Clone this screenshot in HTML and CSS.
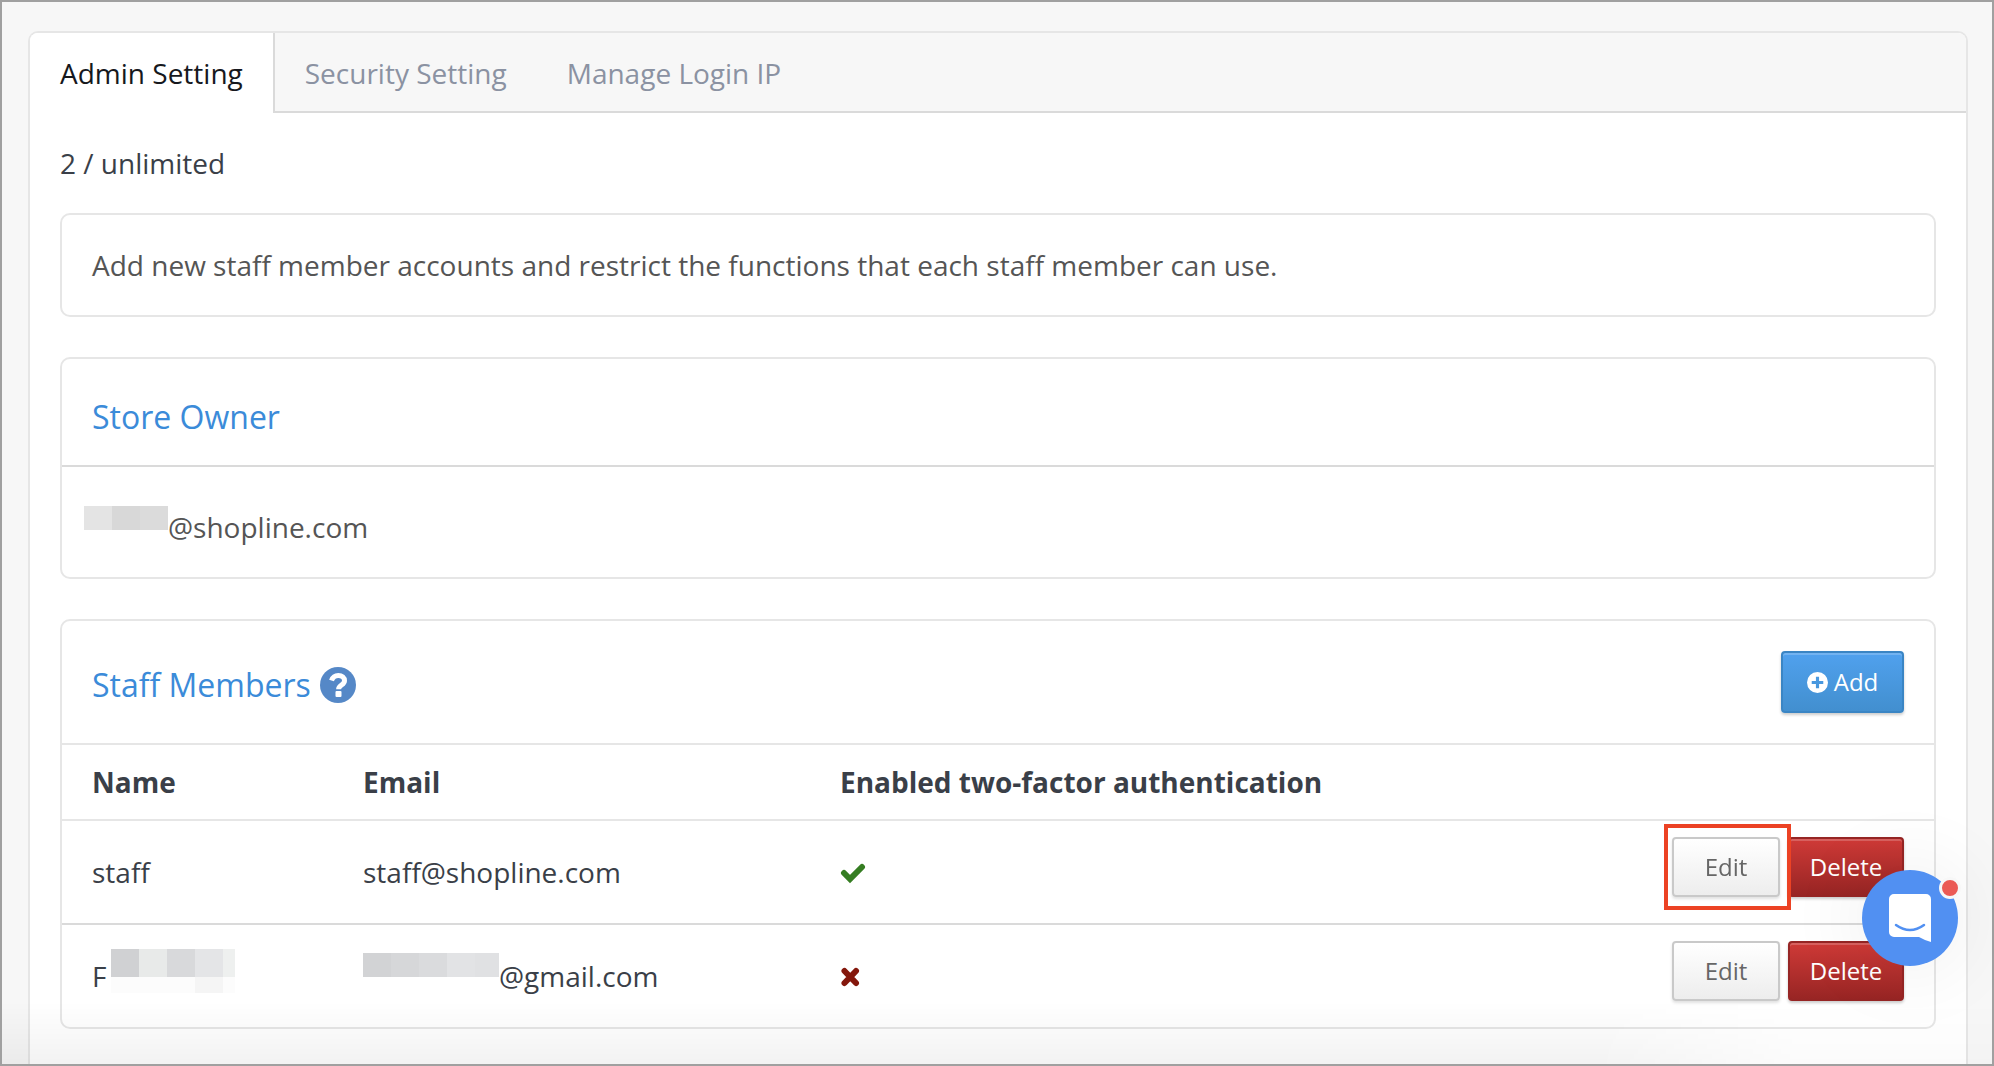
FILE: index.html
```html
<!DOCTYPE html>
<html lang="en">
<head>
<meta charset="utf-8">
<title>Admin Setting</title>
<link rel="stylesheet" href="styles.css">
</head>
<body>
<main class="panel">
  <nav class="tabs" aria-label="Settings">
    <a class="tab tab-active" href="#admin">Admin Setting</a>
    <a class="tab" href="#security">Security Setting</a>
    <a class="tab" href="#login-ip">Manage Login IP</a>
  </nav>
  <div class="content">
    <p class="quota">2 / unlimited</p>
    <section class="card">
      <p class="note">Add new staff member accounts and restrict the functions that each staff member can use.</p>
    </section>
    <section class="card">
      <header class="card-head"><h2 class="title">Store Owner</h2></header>
      <p class="owner">
        <span class="mask mask-owner"></span><span>@shopline.com</span>
      </p>
    </section>
    <section class="card">
      <header class="card-head card-head-staff">
        <h2 class="title">Staff Members
          <svg class="help" viewBox="0 0 36 36" role="img" aria-label="Help"><circle cx="18" cy="18" r="18" fill="#5588c7"/><path d="M11.500 13.500C12.800 10 15 8.500 18.300 8.500c3.700 0 6.200 2.300 6.200 5.200 0 4.400-5.900 4.300-5.900 8.600" fill="none" stroke="#fff" stroke-width="5"/><rect x="15.500" y="24" width="6" height="6" rx="1" fill="#fff"/></svg>
        </h2>
        <button class="btn btn-add" type="button">
          <svg class="plus" viewBox="0 0 20 20" aria-hidden="true"><path fill="#fff" fill-rule="evenodd" d="M10 0a10 10 0 1 0 0 20a10 10 0 0 0 0-20zM8.500 4.500h3v4h4v3h-4v4h-3v-4h-4v-3h4z"/></svg>
          Add
        </button>
      </header>
      <table class="staff">
        <colgroup><col class="col-name"><col class="col-email"><col class="col-auth"><col></colgroup>
        <thead>
          <tr><th>Name</th><th>Email</th><th>Enabled two-factor authentication</th><td></td></tr>
        </thead>
        <tbody>
          <tr>
            <td>staff</td>
            <td>staff@shopline.com</td>
            <td><svg class="mark" viewBox="0 0 26 22" role="img" aria-label="Enabled"><path d="M4 11L10 17L22 5" fill="none" stroke="#357d22" stroke-width="6" stroke-linecap="round"/></svg></td>
            <td><div class="actions">
              <button class="btn btn-edit highlight" type="button">Edit</button>
              <button class="btn btn-delete" type="button">Delete</button>
            </div></td>
          </tr>
          <tr>
            <td><div class="masked">F<span class="mask mask-name"></span></div></td>
            <td><div class="masked"><span class="mask mask-email"></span>@gmail.com</div></td>
            <td><svg class="mark" viewBox="0 0 26 22" role="img" aria-label="Disabled"><path d="M4.500 5L16 17M16 5L4.500 17" fill="none" stroke="#84170c" stroke-width="6" stroke-linecap="round"/></svg></td>
            <td><div class="actions">
              <button class="btn btn-edit" type="button">Edit</button>
              <button class="btn btn-delete" type="button">Delete</button>
            </div></td>
          </tr>
        </tbody>
      </table>
    </section>
  </div>
</main>
<div class="shade"></div>
<button class="chat" type="button" aria-label="Open chat">
  <svg class="chat-icon" viewBox="0 0 42 48" aria-hidden="true"><path fill="#fff" d="M5 0h32a5 5 0 0 1 5 5v43q-7-2-12-5H5a5 5 0 0 1-5-5V5a5 5 0 0 1 5-5z"/><path d="M7 31q14 10 28 0" fill="none" stroke="#5190f2" stroke-width="2.500" stroke-linecap="round"/></svg>
  <span class="dot"></span>
</button>
<div class="frame"></div>
</body>
</html>
```
FILE: styles.css
```css
* { box-sizing: border-box; }

html, body { height: 100%; }

body {
  margin: 0;
  padding: 31px 26px 0 28px;
  overflow: hidden;
  background: #f7f7f7;
  color: #3a3f48;
  font: 28px/38px "Open Sans", "Noto Sans", sans-serif;
}

p, h2 { margin: 0; }

.frame {
  position: fixed;
  inset: 0;
  border: 2px solid #a0a0a0;
  pointer-events: none;
}

.panel {
  min-height: 100%;
  border: 2px solid #e6e6e6;
  border-bottom: 0;
  border-radius: 10px 10px 0 0;
  background: #fff;
  overflow: hidden;
}

.tabs {
  display: flex;
  background: linear-gradient(#dadada, #dadada) bottom / 100% 2px no-repeat #f7f7f7;
}

.tab {
  padding: 21px 30px;
  color: #8b92a2;
  text-decoration: none;
}

.tab-active {
  border-right: 2px solid #dadada;
  background: #fff;
  color: #16181d;
}

.content {
  display: flex;
  flex-direction: column;
  gap: 40px;
  padding: 31px 30px 64px;
}

.quota { margin-bottom: -9px; }

.card {
  border: 2px solid #e6e6e6;
  border-radius: 10px;
}

.note {
  padding: 31px 30px;
  color: #555;
}

.card-head {
  display: flex;
  align-items: center;
  justify-content: space-between;
  padding: 38px 30px 28px;
  border-bottom: 2px solid #dadada;
}

.card-head-staff {
  padding: 30px;
  border-bottom-color: #e6e6e6;
}

.card-head-staff .title { padding-top: 6px; }

.title {
  display: flex;
  align-items: center;
  gap: 9px;
  color: #3b8bd9;
  font-size: 32px;
  font-weight: 400;
  line-height: 40px;
}

.help { width: 36px; height: 36px; }

.owner {
  display: flex;
  padding: 41px 22px 31px;
  color: #555;
}

.mask { height: 24px; }

.mask-owner {
  width: 84px;
  margin-top: -2px;
  background: linear-gradient(90deg, #e4e4e4 28px, #d8d8d8 28px 56px, #dbdbdb 56px);
}

.mask-name {
  width: 124px;
  height: 44px;
  margin-left: 5px;
  background:
    linear-gradient(90deg, #d0d1d3 28px, #e8eae9 28px 56px, #d8d9db 56px 84px, #e4e5e7 84px 112px, #eef0ef 112px) top / 100% 28px no-repeat,
    linear-gradient(90deg, #fcfcfc 84px, #f5f5f5 84px 112px, #fcfcfc 112px);
}

.masked .mask-email {
  width: 136px;
  margin-top: -4px;
  background: linear-gradient(90deg, #d2d3d5 28px, #d6d7d9 28px 56px, #dadbdd 56px 84px, #e2e3e5 84px 112px, #e0e1e3 112px);
}

.staff {
  width: 100%;
  border-spacing: 0;
  table-layout: fixed;
}

.col-name { width: 271px; }
.col-email { width: 477px; }
.col-auth { width: 600px; }

.staff th, .staff td {
  height: 104px;
  padding: 0 0 0 30px;
  border-bottom: 2px solid #dadada;
  text-align: left;
  vertical-align: middle;
}

.staff thead th, .staff thead td { height: 76px; border-color: #e6e6e6; }
.staff tbody tr:last-child td { height: 102px; border-bottom: 0; }

.masked { display: flex; height: 38px; }
.masked .mask { margin-top: -8px; }
.masked .mask-email { margin-top: -4px; }

.mark { display: block; width: 26px; height: 22px; margin-top: 2px; }

.actions {
  display: flex;
  justify-content: flex-end;
  gap: 8px;
  padding: 0 30px 10px 0;
}

.btn {
  height: 60px;
  padding: 0;
  border: 2px solid;
  border-radius: 4px;
  font: 24px/32px "Open Sans", "Noto Sans", sans-serif;
  box-shadow: 0 2px 3px rgba(0, 0, 0, .12);
}

.btn-add {
  display: flex;
  align-items: center;
  justify-content: center;
  gap: 6px;
  width: 123px;
  height: 62px;
  border-color: #3a85c4;
  background: linear-gradient(#50a1ee, #428fcf);
  color: #fff;
  box-shadow: inset 0 2px 0 rgba(255, 255, 255, .2), 0 2px 3px rgba(0, 0, 0, .2);
}

.plus { width: 21px; height: 21px; }

.btn-edit {
  width: 108px;
  border-color: #c9c9c9;
  background: linear-gradient(#fff, #ededed);
  color: #666;
}

.btn-delete {
  width: 116px;
  border-color: #962524;
  background: linear-gradient(#cf3a37, #982524);
  color: #fff;
  box-shadow: inset 0 2px 0 rgba(255, 255, 255, .2), 0 2px 3px rgba(0, 0, 0, .2);
}

.highlight { position: relative; z-index: 1; }

.highlight::after {
  content: "";
  position: absolute;
  inset: -15px -13px -15px -10px;
  border: 4px solid #ec4224;
}

.shade {
  position: fixed;
  right: 0;
  bottom: 0;
  left: 0;
  height: 64px;
  background: linear-gradient(rgba(0, 0, 0, 0), rgba(0, 0, 0, .05));
  mask-image: linear-gradient(90deg, #000 80%, rgba(0, 0, 0, .3) 90%);
  pointer-events: none;
}

.chat {
  position: fixed;
  right: 36px;
  bottom: 100px;
  z-index: 2;
  display: grid;
  place-items: center;
  width: 96px;
  height: 96px;
  padding: 0;
  border: 0;
  border-radius: 50%;
  background: #5190f2;
  box-shadow: 0 0 80px 10px rgba(0, 0, 0, .06);
}

.chat-icon { width: 42px; height: 48px; }

.dot {
  position: absolute;
  top: 7px;
  right: -3px;
  width: 22px;
  height: 22px;
  border: 3px solid #f7f7f7;
  border-radius: 50%;
  background: #eb5a55;
}
```
